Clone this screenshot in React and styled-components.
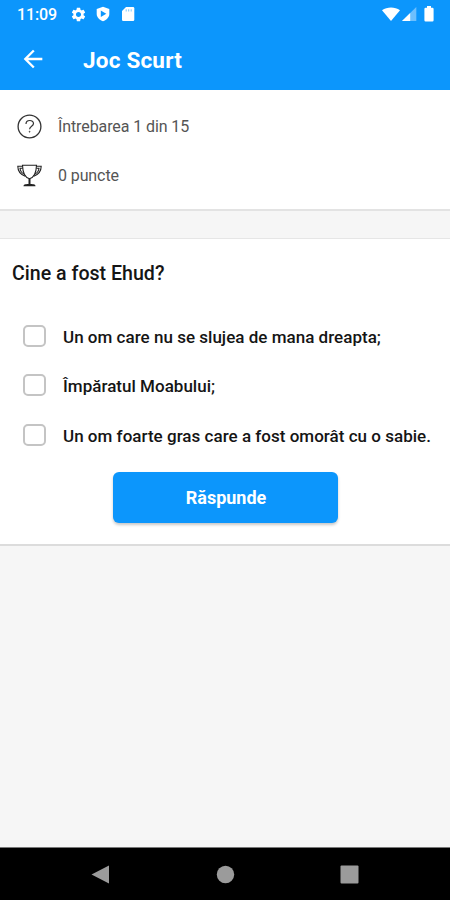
import React, { useState } from 'react';
import styled, { createGlobalStyle } from 'styled-components';
import { MdSettings, MdArrowBack } from 'react-icons/md';

const GlobalStyle = createGlobalStyle`
  * {
    box-sizing: border-box;
  }

  body {
    margin: 0;
    font-family: Roboto, sans-serif;
    background-color: #f6f6f6;
  }

  svg {
    display: block;
    flex-shrink: 0;
  }
`;

const Screen = styled.div`
  display: flex;
  flex-direction: column;
  width: 450px;
  height: 900px;
  overflow: hidden;
  background-color: #f6f6f6;
`;

const TopBar = styled.header`
  height: 90px;
  color: #fff;
  background-color: #0c96fc;
`;

const StatusBar = styled.div`
  display: flex;
  align-items: center;
  height: 28px;
  padding: 0 16px 0 17px;
`;

const Clock = styled.span`
  width: 53px;
  padding-top: 1px;
  font-size: 16px;
  font-weight: 500;
  letter-spacing: -0.1px;
`;

const Notifications = styled.div`
  display: flex;
  align-items: center;
  gap: 9px;
`;

const Signals = styled.div`
  display: flex;
  align-items: center;
  margin-left: auto;
`;

const Toolbar = styled.div`
  display: flex;
  align-items: center;
  height: 61px;
  padding-left: 19px;
`;

const Title = styled.h1`
  margin: 2px 0 0 36px;
  font-size: 22.5px;
  font-weight: 700;
  letter-spacing: 0.2px;
`;

const BackButton = styled.button`
  padding: 0;
  border: 0;
  color: inherit;
  background: none;
`;

const Panel = styled.section`
  background-color: #fff;
  border-bottom: 2px solid #dcdcdc;
`;

const Summary = styled(Panel)`
  height: 121px;
  padding: 12px 17px 0;
  border-bottom-color: #e3e3e3;
`;

const SummaryRow = styled.div`
  display: flex;
  align-items: center;
  gap: 16px;
  height: 49px;
  font-size: 16px;
  font-weight: 400;
  letter-spacing: -0.1px;
  color: #555;
`;

const Question = styled(Panel)`
  height: 308px;
  margin-top: 27px;
  padding: 23px 12px 0;
  border-top: 1px solid #e6e6e6;
`;

const QuestionText = styled.h2`
  margin: 0 0 25px;
  font-size: 19.6px;
  font-weight: 500;
  line-height: 24px;
  color: #151515;
`;

const Answer = styled.label`
  display: flex;
  align-items: center;
  height: 49.5px;
  padding-left: 11px;
  font-size: 17px;
  font-weight: 500;
  letter-spacing: 0.02px;
  white-space: nowrap;
  color: #151515;
`;

const AnswerText = styled.span`
  margin: 2px 0 0 17px;
`;

const Checkbox = styled.input`
  appearance: none;
  width: 23px;
  height: 22px;
  margin: 0;
  border: 2px solid #c4c4c4;
  border-radius: 5px;
  background-color: #fff;

  &:checked {
    border-color: #0c96fc;
    background-color: #0c96fc;
  }
`;

const SubmitButton = styled.button`
  display: block;
  width: 225px;
  height: 51px;
  margin: 12px auto 0;
  padding: 1px 0 0 2px;
  border: 0;
  border-radius: 6px;
  font-family: inherit;
  font-size: 18px;
  font-weight: 700;
  color: #fff;
  background-color: #0c96fc;
  box-shadow: 0 2px 3px rgba(0, 0, 0, 0.22);
`;

const NavBar = styled.nav`
  display: flex;
  align-items: center;
  justify-content: space-between;
  height: 53px;
  margin-top: auto;
  padding: 0 91px;
  border-top: 1px solid #777;
  background-color: #000;
`;

const ShieldIcon = () => (
  <svg width="14" height="16" viewBox="0 0 14 16">
    <path fill="#fff" d="M7 0.8 13.3 3v5c0 3.2-2.6 6-6.3 7.3C3.3 14 .7 11.2.7 8V3z" />
    <path fill="#0c96fc" d="M4.8 4.5 10.3 7.8 4.8 11z" />
  </svg>
);

const SdCardIcon = () => (
  <svg width="17" height="16" viewBox="0 0 17 16">
    <path fill="#fff" d="M7 1h7q1.3 0 1.3 1.3v11.4q0 1.3-1.3 1.3H4.3Q3 15 3 13.7V5z" />
    <path stroke="#0c96fc" strokeOpacity=".6" strokeWidth=".9" d="M7.2 3.3v2.2M9.7 3.3v2.2M12.2 3.3v2.2" />
  </svg>
);

const WifiIcon = () => (
  <svg width="18" height="15" viewBox="0 0 18 15">
    <path fill="#fff" d="M0 3.2C5.2-.4 12.800-.4 18 3.2L9 14z" />
  </svg>
);

const CellIcon = styled.svg`
  width: 15px;
  height: 15px;
  margin: 0 7px 0 2px;
`;

const BatteryIcon = () => (
  <svg width="10" height="16" viewBox="0 0 10 16">
    <path fill="#fff" d="M3 0h4v1.7h1.4Q9.6 1.7 9.6 3v11.3q0 1.2-1.2 1.2H1.6Q.4 15.5.4 14.3V3q0-1.3 1.2-1.3H3z" />
  </svg>
);

const QuestionIcon = () => (
  <svg width="25" height="25" viewBox="0 0 25 25" fill="none" stroke="#333">
    <circle cx="12.5" cy="12.5" r="11.4" strokeWidth="1.3" />
    <path strokeWidth="1.2" d="M9 10c0-4.600 7.500-4.600 7.500-.5 0 2.800-3.900 2.800-3.900 5.800" />
    <circle cx="12.6" cy="17.7" r=".5" fill="#333" strokeWidth=".6" />
  </svg>
);

const TrophyIcon = () => (
  <svg width="25" height="23" viewBox="0 0 25 23" fill="none" stroke="#222" strokeWidth="1.1">
    <path d="M5.5 1.2h14c-.2 6.800-2.500 12.300-7 13.500-4.500-1.200-6.800-6.700-7-13.500z" />
    <path d="M5.500 2.300H.8c0 5 2.700 8.200 7.400 10M19.500 2.300h4.700c0 5-2.700 8.200-7.400 10" />
    <path d="M5.700 4.200H3c.3 2.700 1.500 4.500 4 5.800M19.300 4.200H22c-.3 2.700-1.500 4.500-4 5.800" />
    <path strokeWidth="2" d="M12.500 14.700v6" />
    <path fill="#222" stroke="none" d="M6.500 22.200c0-2 2.500-2.200 6-2.200s6 .2 6 2.200z" />
  </svg>
);

const NavIcon = styled.svg`
  width: 19px;
  height: 19px;
  fill: #9b9b9b;
`;

const answers = [
  'Un om care nu se slujea de mana dreapta;',
  'Împăratul Moabului;',
  'Un om foarte gras care a fost omorât cu o sabie.'
];

const App = () => {
  const [selected, setSelected] = useState([]);

  const toggleAnswer = (index) => {
    setSelected(selected.includes(index)
      ? selected.filter(i => i !== index)
      : [...selected, index]);
  };

  return (
    <Screen>
      <GlobalStyle />
      <TopBar>
        <StatusBar>
          <Clock>11:09</Clock>
          <Notifications>
            <MdSettings size={17} />
            <ShieldIcon />
            <SdCardIcon />
          </Notifications>
          <Signals>
            <WifiIcon />
            <CellIcon viewBox="0 0 15 15">
              <path fill="#6dbffd" d="M14.3 0v14H0z" />
              <path fill="#fff" d="M8.2 6v8H0z" />
            </CellIcon>
            <BatteryIcon />
          </Signals>
        </StatusBar>
        <Toolbar>
          <BackButton aria-label="Înapoi">
            <MdArrowBack size={28} />
          </BackButton>
          <Title>Joc Scurt</Title>
        </Toolbar>
      </TopBar>

      <Summary>
        <SummaryRow>
          <QuestionIcon />
          <span>Întrebarea 1 din 15</span>
        </SummaryRow>
        <SummaryRow>
          <TrophyIcon />
          <span>0 puncte</span>
        </SummaryRow>
      </Summary>

      <Question>
        <QuestionText>Cine a fost Ehud?</QuestionText>
        {answers.map((answer, index) => (
          <Answer key={answer}>
            <Checkbox
              type="checkbox"
              checked={selected.includes(index)}
              onChange={() => toggleAnswer(index)}
            />
            <AnswerText>{answer}</AnswerText>
          </Answer>
        ))}
        <SubmitButton type="button">Răspunde</SubmitButton>
      </Question>

      <NavBar>
        <NavIcon viewBox="0 0 19 19">
          <path d="M18 .5v18L.5 9.5z" />
        </NavIcon>
        <NavIcon viewBox="0 0 19 19">
          <circle cx="9.5" cy="9.5" r="8.7" />
        </NavIcon>
        <NavIcon viewBox="0 0 19 19">
          <rect x=".5" y=".5" width="18" height="18" rx="1" />
        </NavIcon>
      </NavBar>
    </Screen>
  );
};

export default App;
